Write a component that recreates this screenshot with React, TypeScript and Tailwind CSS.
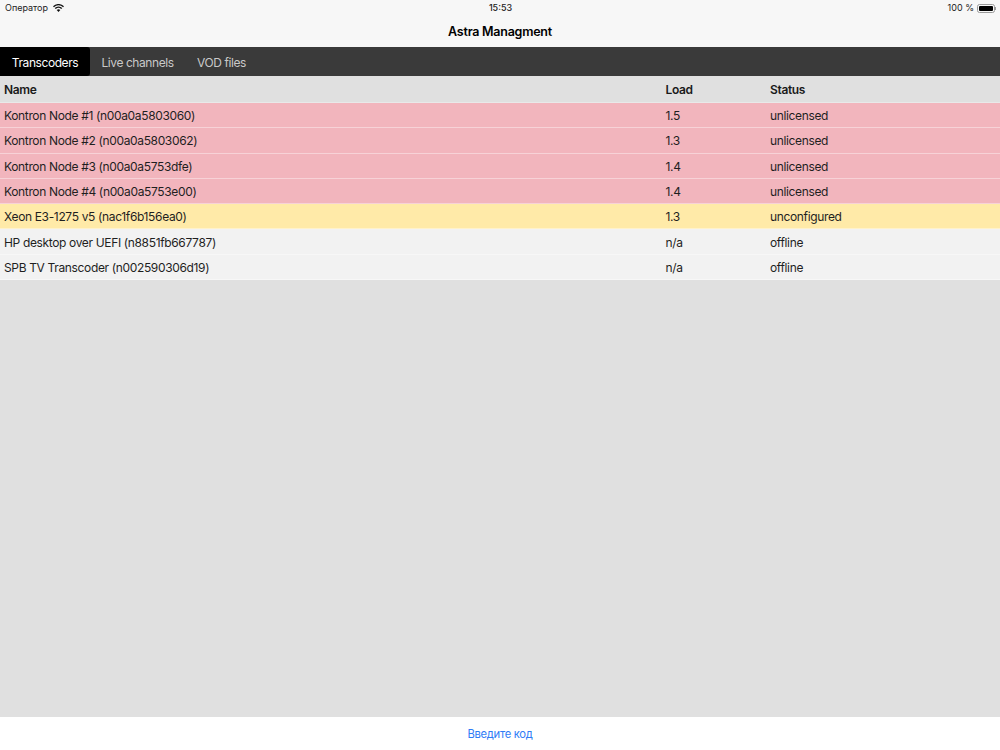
const rows = [
  { name: 'Kontron Node #1 (n00a0a5803060)', load: '1.5', status: 'unlicensed', color: 'bg-[#f2b5bd]' },
  { name: 'Kontron Node #2 (n00a0a5803062)', load: '1.3', status: 'unlicensed', color: 'bg-[#f2b5bd]' },
  { name: 'Kontron Node #3 (n00a0a5753dfe)', load: '1.4', status: 'unlicensed', color: 'bg-[#f2b5bd]' },
  { name: 'Kontron Node #4 (n00a0a5753e00)', load: '1.4', status: 'unlicensed', color: 'bg-[#f2b5bd]' },
  { name: 'Xeon E3-1275 v5 (nac1f6b156ea0)', load: '1.3', status: 'unconfigured', color: 'bg-[#ffeaa8]' },
  { name: 'HP desktop over UEFI (n8851fb667787)', load: 'n/a', status: 'offline', color: 'bg-[#f2f2f2]' },
  { name: 'SPB TV Transcoder (n002590306d19)', load: 'n/a', status: 'offline', color: 'bg-[#f2f2f2]' },
];

function Wifi() {
  return (
    <svg width="11" height="8" viewBox="0 0 22 16" className="ml-[5px]">
      <path d="M11 16 L7.4 12.2 A5.2 5.2 0 0 1 14.6 12.2 Z" fill="#111" />
      <path d="M5.6 10.2 L3.4 8 A10.9 10.9 0 0 1 18.6 8 L16.4 10.2 A7.8 7.8 0 0 0 5.6 10.2 Z" fill="#111" />
      <path d="M1.9 6.4 L0 4.4 A15.8 15.8 0 0 1 22 4.4 L20.1 6.4 A13 13 0 0 0 1.9 6.4 Z" fill="#111" />
    </svg>
  );
}

function Battery() {
  return (
    <div className="flex items-center ml-[3px]">
      <div className="w-[18px] h-[9px] rounded-[2.5px] border border-[#9a9a9a] p-[1px]">
        <div className="w-full h-full bg-black rounded-[1px]" />
      </div>
      <div className="w-[1px] h-[3px] bg-[#9a9a9a]" />
    </div>
  );
}

export default function App() {
  return (
    <div className="w-[1000px] h-[750px] flex flex-col bg-[#e0e0e0] text-[#1f1f1f] font-['Inter','Liberation_Sans',sans-serif] overflow-hidden">
      <div className="h-[47px] bg-[#f7f7f7] flex flex-col shrink-0">
        <div className="h-[15px] pl-[5px] pr-[4px] pt-[1px] grid grid-cols-3 items-center text-[9px] text-[#222]">
          <div className="flex items-center">
            <span>Оператор</span>
            <Wifi />
          </div>
          <div className="text-center font-medium">15:53</div>
          <div className="flex items-center justify-end">
            <span>100 %</span>
            <Battery />
          </div>
        </div>
        <div className="h-[32px] pt-[3px] flex items-center justify-center text-[12.5px] tracking-[-0.25px] font-semibold text-black">
          Astra Managment
        </div>
      </div>

      <div className="h-[29px] bg-[#3a3a3a] flex text-[12px] tracking-[-0.43px] text-[#c9c9c9] shrink-0">
        <div className="pt-[2px] w-[90px] bg-black text-white rounded-r-[3px] flex items-center justify-center">Transcoders</div>
        <div className="pt-[2px] px-[11.5px] flex items-center">Live channels</div>
        <div className="pt-[2px] px-[12px] flex items-center">VOD files</div>
      </div>

      <div className="h-[27px] pt-[1px] flex items-center text-[12px] tracking-[-0.35px] font-semibold text-[#1a1a1a] border-b border-[#e9e9e9] shrink-0">
        <div className="w-[665.5px] pl-[4px]">Name</div>
        <div className="w-[104.5px]">Load</div>
        <div>Status</div>
      </div>

      {rows.map((r) => (
        <div key={r.name} className={`h-[25.3px] pt-[2px] flex items-center text-[12px] tracking-[-0.35px] border-b border-[#ffffff66] shrink-0 ${r.color}`}>
          <div className="w-[665.5px] pl-[4px]">{r.name}</div>
          <div className="w-[104.5px]">{r.load}</div>
          <div>{r.status}</div>
        </div>
      ))}

      <div className="flex-1" />

      <div className="h-[33px] pt-[2px] bg-white flex items-center justify-center text-[11.25px] tracking-[-0.3px] text-[#2f7cf6] shrink-0">
        Введите код
      </div>
    </div>
  );
}
